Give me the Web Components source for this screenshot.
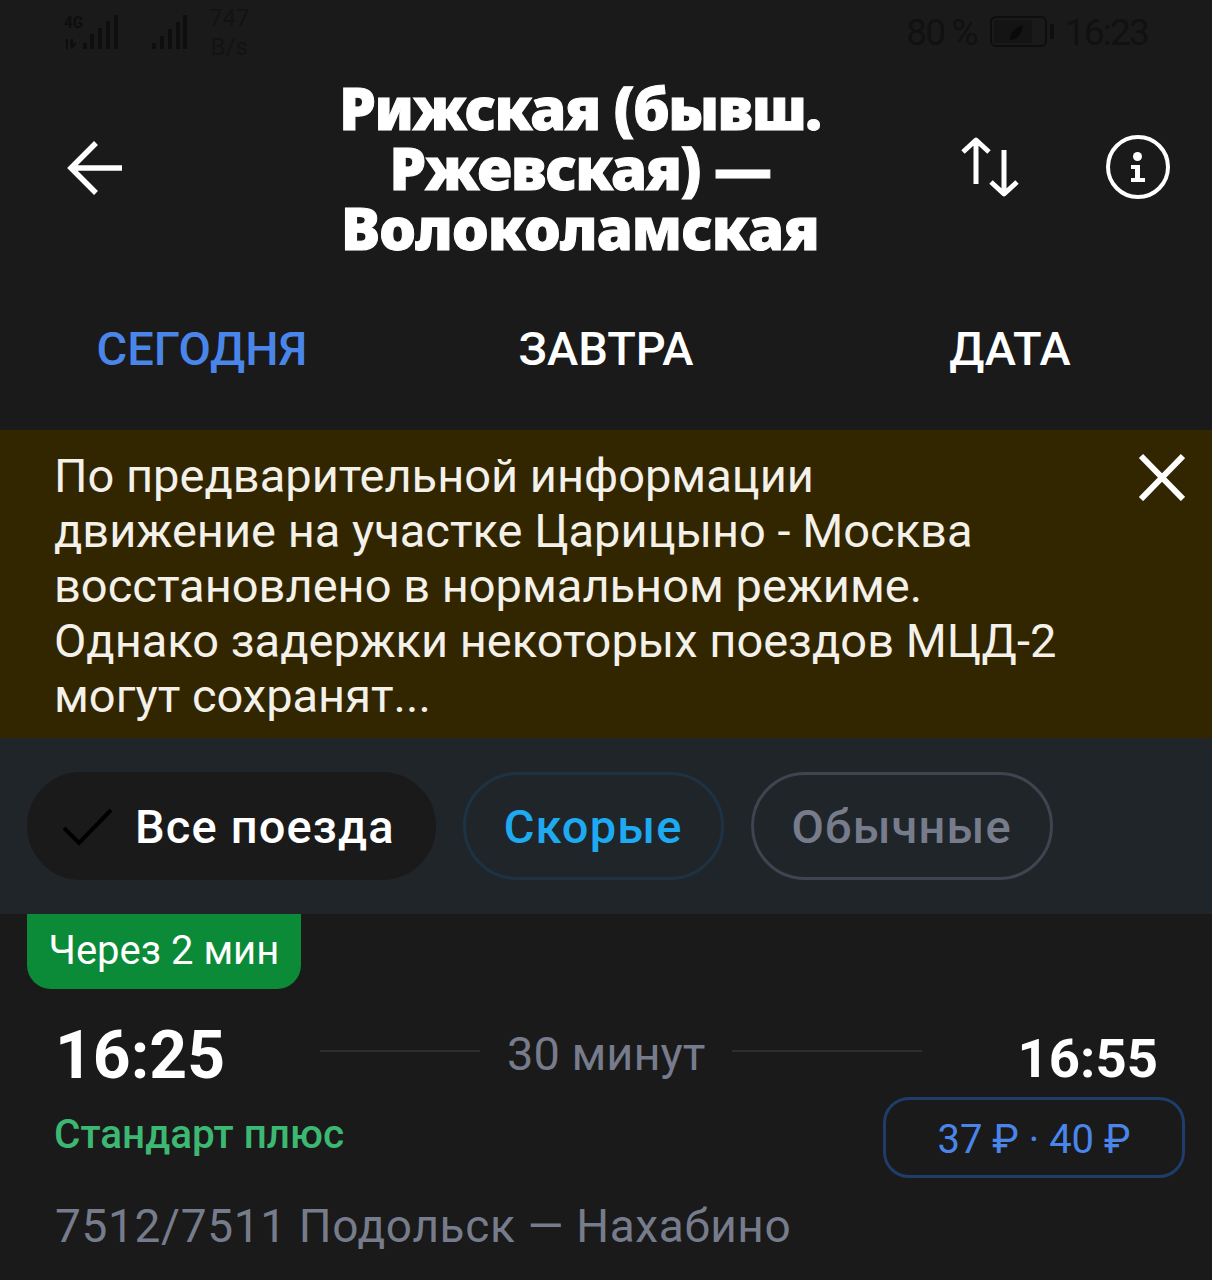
<!DOCTYPE html>
<html lang="ru">
<head>
<meta charset="utf-8">
<title>Рижская — Волоколамская</title>
<style>
html, body { margin: 0; background: #1a1a1a; }
body { font-family: Roboto, "Liberation Sans", sans-serif; width: 1212px; height: 1280px; overflow: hidden; }
</style>
</head>
<body>
<status-bar></status-bar>
<route-header><div>Рижская (бывш.</div><div>Ржевская) —</div><div style="letter-spacing:-.7px">Волоколамская</div></route-header>
<day-tabs></day-tabs>
<notice-banner>По предварительной информации<br>движение на участке Царицыно - Москва<br>восстановлено в нормальном режиме.<br>Однако задержки некоторых поездов МЦД-2<br>могут сохранят...</notice-banner>
<filter-bar></filter-bar>
<train-card></train-card>

<script>
class StatusBar extends HTMLElement {
    connectedCallback() {
        this.attachShadow({ mode: "open" });
        this.shadowRoot.innerHTML = `
        <style>
            :host { display: flex; justify-content: space-between; height: 64px; box-sizing: border-box; padding: 6px 64px 0 64px; color: #101010; }
            .left, .right { display: flex; align-items: center; height: 52px; }
            .left { gap: 32px; }
            .sig { margin-top: -7px; }
            .speed { font-size: 24px; line-height: 29px; text-align: center; margin: 2px 0 0 -12px; color: #131313; }
            .right { font-size: 37px; letter-spacing: -1.800px; color: #111; }
            svg { display: block; }
            .pct { margin-right: 13px; }
            .bat { margin-right: 11px; }
        </style>
        <div class="left">
            <svg class="sig" width="56" height="42" viewBox="0 -7 56 42" fill="#0e0e0e">
                <text x="0" y="13" font-size="16" font-weight="700" font-family="Roboto" textLength="19" lengthAdjust="spacingAndGlyphs">4G</text>
                <path d="M1 26l2-2h1v10H2v-6zM7 24h2v5l3-2v2l-4 5-2-4z"/>
                <rect x="19" y="28" width="4" height="6"/><rect x="26" y="19" width="4" height="15"/>
                <rect x="34" y="13" width="4" height="21"/><rect x="42" y="6" width="4" height="28"/><rect x="50" y="0" width="4" height="34"/>
            </svg>
            <svg width="37" height="35" viewBox="0 0 37 35" fill="#0e0e0e">
                <rect x="0" y="28" width="4" height="6"/><rect x="8" y="21" width="4" height="13"/>
                <rect x="16" y="14" width="4" height="20"/><rect x="24" y="7" width="4" height="27"/><rect x="31" y="0" width="4" height="34"/>
            </svg>
            <div class="speed">747<br>B/s</div>
        </div>
        <div class="right">
            <span class="pct">80 %</span>
            <svg class="bat" width="64" height="32" viewBox="0 0 64 32">
                <rect x="1" y="1" width="55" height="29" rx="5" fill="none" stroke="#0e0e0e" stroke-width="2"/>
                <rect x="4" y="4" width="38" height="23" rx="2" fill="#141414"/>
                <path d="M20 24c-1-6 4-12 13-15-1 8-5 15-13 15z" fill="#0a0a0a"/>
                <rect x="60" y="8" width="4" height="15" rx="1" fill="#0e0e0e"/>
            </svg>
            <span>16:23</span>
        </div>`;
    }
}

class RouteHeader extends HTMLElement {
    connectedCallback() {
        this.attachShadow({ mode: "open" });
        this.shadowRoot.innerHTML = `
        <style>
            :host { display: grid; grid-template-columns: 264px 1fr 316px; align-items: center; height: 216px; box-sizing: border-box; padding-bottom: 4px; }
            .back { padding-left: 66px; margin-top: -5px; }
            .title { text-align: center; color: #fff; font-family: "Noto Sans", sans-serif; font-weight: 900; font-size: 58px; letter-spacing: -1.300px; line-height: 60px; white-space: nowrap; margin-top: -4px; -webkit-text-stroke: 1px #fff; }
            .acts { display: flex; justify-content: flex-end; align-items: center; gap: 86px; padding-right: 42px; margin-top: -6px; }
            svg { display: block; }
        </style>
        <div class="back">
            <svg width="58" height="54" viewBox="0 0 58 54" fill="none" stroke="#fff" stroke-width="5.500">
                <path d="M56 27H7M30 2L5 27l25 25"/>
            </svg>
        </div>
        <div class="title"><slot></slot></div>
        <div class="acts">
            <svg width="60" height="60" viewBox="0 0 60 60" fill="none" stroke="#fff" stroke-width="5">
                <path d="M16 47V4M3 15L16 3l13 12" stroke-linejoin="round"/>
                <path d="M44 13v43M31 45l13 12 13-12" stroke-linejoin="round"/>
            </svg>
            <svg width="64" height="64" viewBox="0 0 64 64">
                <circle cx="32" cy="32" r="30" fill="none" stroke="#fff" stroke-width="4"/>
                <circle cx="31.500" cy="21.500" r="4.500" fill="#fff"/>
                <path d="M25 30h9v13h5v4H25v-4h4v-9h-4z" fill="#fff"/>
            </svg>
        </div>`;
    }
}

class DayTabs extends HTMLElement {
    connectedCallback() {
        this.attachShadow({ mode: "open" });
        this.shadowRoot.innerHTML = `
        <style>
            :host { display: grid; grid-template-columns: 404px 404px 404px; height: 150px; align-items: center; box-sizing: border-box; padding-bottom: 14px; font-size: 47px; font-weight: 500; color: #fff; text-align: center; }
            .on { color: #4a86ea; }
        </style>
        <div class="on">СЕГОДНЯ</div><div>ЗАВТРА</div><div>ДАТА</div>`;
    }
}

class NoticeBanner extends HTMLElement {
    connectedCallback() {
        this.attachShadow({ mode: "open" });
        this.shadowRoot.innerHTML = `
        <style>
            :host { display: flex; justify-content: space-between; height: 308px; box-sizing: border-box; padding: 18px 27px 0 54px; background: #322600; color: #f3f1ea; font-size: 47px; line-height: 55px; }
            svg { display: block; margin-top: 5px; }
        </style>
        <div><slot></slot></div>
        <svg width="48" height="48" viewBox="0 0 48 48" stroke="#fff" stroke-width="6"><path d="M4 3l42 43M46 3L4 46"/></svg>`;
    }
}

class FilterChip extends HTMLElement {
    connectedCallback() {
        this.attachShadow({ mode: "open" });
        const color = this.getAttribute("color") || "#fff";
        const line = this.getAttribute("line") || "transparent";
        const fill = this.getAttribute("fill") || "transparent";
        const check = this.hasAttribute("checked");
        this.shadowRoot.innerHTML = `
        <style>
            :host { display: block; }
            .chip { display: flex; align-items: center; height: 108px; box-sizing: border-box; padding: 0 38px; border-radius: 54px; border: 3px solid ${line}; background: ${fill}; color: ${color}; font-size: 47px; font-weight: 500; letter-spacing: 1.150px; }
            svg { display: block; margin: 2px 22px 0 -5px; }
        </style>
        <div class="chip">
            ${check ? `<svg width="50" height="38" viewBox="0 0 50 38" fill="none" stroke="#000" stroke-width="4"><path d="M1 20l15 15L48 2"/></svg>` : ""}
            <slot></slot>
        </div>`;
    }
}

class FilterBar extends HTMLElement {
    connectedCallback() {
        this.attachShadow({ mode: "open" });
        this.shadowRoot.innerHTML = `
        <style>
            :host { display: flex; gap: 27px; align-items: center; height: 176px; box-sizing: border-box; padding: 0 27px; background: #20252a; }
        </style>
        <filter-chip checked fill="#1a1a1a" line="#1a1a1a">Все поезда</filter-chip>
        <filter-chip color="#1eaaf1" line="#1d3344">Скорые</filter-chip>
        <filter-chip color="#777c8c" line="#3f4550">Обычные</filter-chip>`;
    }
}

class TrainCard extends HTMLElement {
    connectedCallback() {
        this.attachShadow({ mode: "open" });
        this.shadowRoot.innerHTML = `
        <style>
            :host { display: block; box-sizing: border-box; height: 366px; padding: 0 27px; background: #1a1a1a; }
            .badge { display: inline-block; vertical-align: top; height: 75px; line-height: 74px; box-sizing: border-box; padding: 0 21.500px; background: #0b8a37; color: #fff; font-size: 40px; border-radius: 0 0 24px 24px; }
            .row { display: flex; align-items: center; height: 76px; margin-top: 27px; padding-left: 28px; }
            .dep { font-size: 66px; font-weight: 700; color: #fff; width: 265px; margin-top: 2px; }
            .rule { height: 2px; background: #2c2e31; margin-top: -6px; }
            .dur { font-size: 47px; color: #777c8c; margin: -2px 27px 0; }
            .arr { font-size: 54.500px; font-weight: 700; color: #fff; margin: 8px 27px 0 auto; }
            .mid { display: flex; justify-content: space-between; align-items: flex-start; padding-left: 27px; }
            .cat { font-size: 40.500px; font-weight: 500; color: #3cb873; line-height: 60px; margin-top: 12px; }
            .price { width: 302px; height: 81px; box-sizing: border-box; padding-top: 4px; border: 3px solid #1e3d68; border-radius: 26px; color: #4a86ea; font-size: 40px; display: flex; align-items: center; justify-content: center; margin-top: 5px; }
            .name { font-size: 46px; color: #777c8c; padding-left: 28px; margin-top: 21px; letter-spacing: .65px; }
        </style>
        <div class="badge">Через 2 мин</div>
        <div class="row">
            <div class="dep">16:25</div>
            <div class="rule" style="width:160px"></div>
            <div class="dur">30 минут</div>
            <div class="rule" style="width:190px"></div>
            <div class="arr">16:55</div>
        </div>
        <div class="mid">
            <div class="cat">Стандарт плюс</div>
            <div class="price">37 ₽ · 40 ₽</div>
        </div>
        <div class="name">7512/7511 Подольск — Нахабино</div>`;
    }
}

customElements.define("status-bar", StatusBar);
customElements.define("route-header", RouteHeader);
customElements.define("day-tabs", DayTabs);
customElements.define("notice-banner", NoticeBanner);
customElements.define("filter-chip", FilterChip);
customElements.define("filter-bar", FilterBar);
customElements.define("train-card", TrainCard);
</script>
</body>
</html>
